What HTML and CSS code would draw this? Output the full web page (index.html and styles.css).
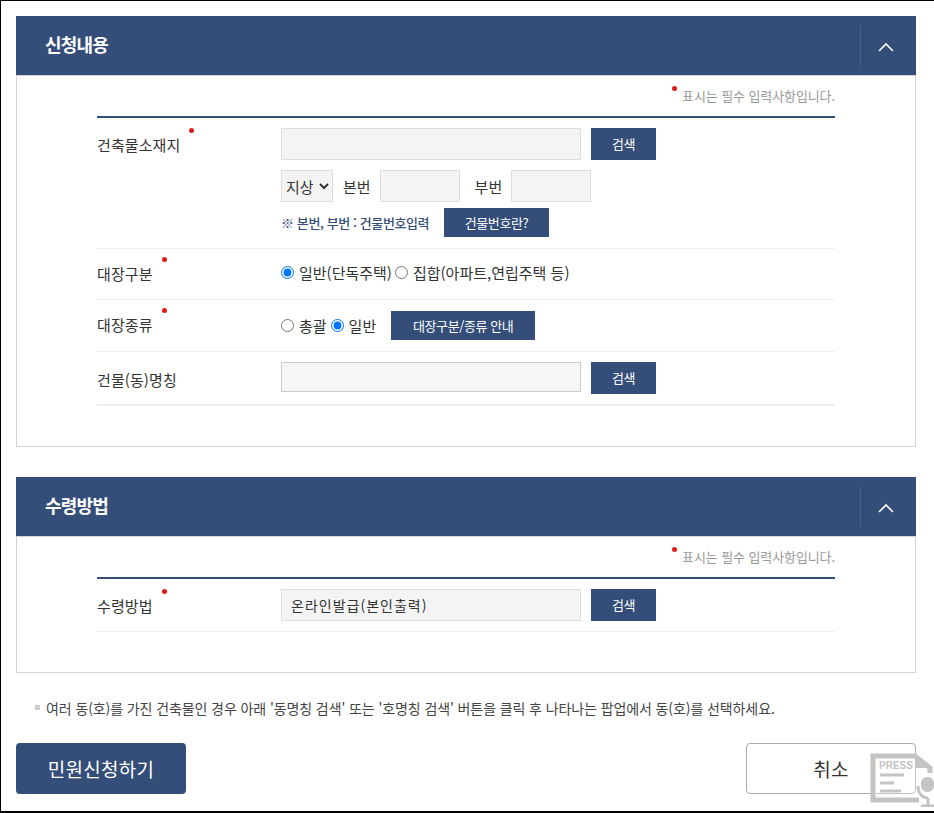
FILE: index.html
```html
<!DOCTYPE html>
<html lang="ko">
<head>
<meta charset="utf-8">
<title>민원신청</title>
<link rel="stylesheet" href="styles.css">
</head>
<body>
<div class="frame">
  <section class="panel first">
    <header class="panel-head">
      <h2>신청내용</h2>
      <button class="toggle" type="button" aria-label="접기"><svg width="16" height="10" viewBox="0 0 16 10"><path d="M1 9 L8 2 L15 9" fill="none" stroke="#fff" stroke-width="1.6"/></svg></button>
    </header>
    <div class="panel-body tall">
      <p class="req-note"><i class="dot"></i>표시는 필수 입력사항입니다.</p>
      <div class="rows">
        <div class="row r-addr">
          <div class="label"><span>건축물소재지<i class="dot"></i></span></div>
          <div class="field">
            <div class="line l1"><input class="inp wide" type="text"><button class="btn search" type="button">검색</button></div>
            <div class="line l2">
              <select class="sel"><option>지상</option></select>
              <span class="cap">본번</span><input class="inp small" type="text">
              <span class="cap cap2">부번</span><input class="inp small" type="text">
            </div>
            <div class="line l3"><span class="hint">※ 본번, 부번 : 건물번호입력</span><button class="btn what" type="button">건물번호란?</button></div>
          </div>
        </div>
        <div class="row r-kind">
          <div class="label"><span>대장구분<i class="dot"></i></span></div>
          <div class="field radios">
            <label><input type="radio" name="a" checked>일반(단독주택)</label>
            <label><input type="radio" name="a">집합(아파트,연립주택 등)</label>
          </div>
        </div>
        <div class="row r-type">
          <div class="label"><span>대장종류<i class="dot"></i></span></div>
          <div class="field radios">
            <label><input type="radio" name="b">총괄</label>
            <label><input type="radio" name="b" checked>일반</label>
            <button class="btn guide" type="button">대장구분/종류 안내</button>
          </div>
        </div>
        <div class="row r-name">
          <div class="label"><span>건물(동)명칭</span></div>
          <div class="field"><div class="line"><input class="inp wide thin" type="text"><button class="btn search" type="button">검색</button></div></div>
        </div>
      </div>
    </div>
  </section>

  <section class="panel second">
    <header class="panel-head">
      <h2>수령방법</h2>
      <button class="toggle" type="button" aria-label="접기"><svg width="16" height="10" viewBox="0 0 16 10"><path d="M1 9 L8 2 L15 9" fill="none" stroke="#fff" stroke-width="1.6"/></svg></button>
    </header>
    <div class="panel-body short">
      <p class="req-note"><i class="dot"></i>표시는 필수 입력사항입니다.</p>
      <div class="rows">
        <div class="row r-recv">
          <div class="label"><span>수령방법<i class="dot"></i></span></div>
          <div class="field"><div class="line"><input class="inp wide spaced" type="text" value="온라인발급(본인출력)"><button class="btn search" type="button">검색</button></div></div>
        </div>
      </div>
    </div>
  </section>

  <p class="notice">여러 동(호)를 가진 건축물인 경우 아래 '동명칭 검색' 또는 '호명칭 검색' 버튼을 클릭 후 나타나는 팝업에서 동(호)를 선택하세요.</p>

  <div class="actions">
    <button class="act primary" type="button">민원신청하기</button>
    <button class="act cancel" type="button">취소</button>
  </div>

  <svg class="press" width="64" height="54" viewBox="0 0 64 54" aria-hidden="true">
    <path d="M49 47 H3 V3 H45 L60 15 V20" fill="#fff" fill-opacity=".3" stroke="#c4c4c4" stroke-width="5"/>
    <path d="M45 3 L60 15 H45 Z" fill="#c4c4c4"/>
    <text x="9" y="16" class="press-text">PRESS</text>
    <path d="M10 22 H34 M10 30 H24 M10 38 H31" stroke="#c4c4c4" stroke-width="3"/>
    <rect x="51" y="24" width="13" height="15" rx="6" fill="#c4c4c4"/>
    <path d="M48 33 C48 41 53 45 58 45 M58 45 V54 M51 53 H64" stroke="#c4c4c4" stroke-width="3" fill="none"/>
  </svg>
</div>
</body>
</html>
```
FILE: styles.css
```css
* { box-sizing: border-box; }
html, body { margin: 0; padding: 0; background: #fff; }
body { font-family: "Noto Sans CJK KR", "Noto Sans", sans-serif; color: #333; }
.frame {
  position: relative;
  width: 934px;
  height: 813px;
  overflow: hidden;
  border: solid #000;
  border-width: 1px 0 2px 1px;
  padding: 15px 18px 0 15px;
}
.panel + .panel { margin-top: 30px; }
.panel-head {
  height: 59px;
  background: #344d79;
  display: flex;
  align-items: center;
  justify-content: space-between;
  padding: 0 4px 0 29px;
}
.panel-head h2 { margin: -2px 0 0; font-size: 18px; font-weight: 700; color: #fff; letter-spacing: -0.8px; line-height: 59px; }
.toggle {
  width: 52px;
  height: 40px;
  background: none;
  border: 0;
  border-left: 1px solid #4b628b;
  padding: 2px 2px 0 0;
  display: flex;
  align-items: center;
  justify-content: center;
}
.panel-body {
  border: 1px solid #d2d2d2;
  border-top: 0;
  padding: 0 80px;
  box-shadow: inset 0 1px 0 #d2d2d2;
}
.tall { height: 372px; }
.short { height: 137px; }
.req-note {
  margin: 0;
  height: 41px;
  padding-top: 11px;
  text-align: right;
  font-size: 13px;
  line-height: 20px;
  color: #999;
  letter-spacing: -0.1px;
}
.dot {
  display: inline-block;
  width: 5px;
  height: 5px;
  border-radius: 50%;
  background: #e01b1b;
  vertical-align: top;
}
.req-note .dot { margin: 0 5px 0 0; }
.rows { border-top: 2px solid #344d79; }
.row { display: flex; border-bottom: 1px solid #eee; }
.label { width: 184px; flex: none; font-size: 15px; line-height: 20px; color: #333; letter-spacing: 0.1px; }
.label span { position: relative; display: inline-block; }
.label .dot { position: absolute; right: -14px; top: -7px; }
.field { flex: 1; font-size: 15px; }
.line { display: flex; align-items: center; }
.inp {
  height: 32px;
  background: #f4f4f4;
  border: 1px solid #ddd;
  border-radius: 0;
  padding: 0 9px;
  font: 14px "Noto Sans CJK KR", sans-serif;
  color: #333;
  outline: 0;
}
.spaced { letter-spacing: 1px; }
.wide { width: 300px; }
.small { width: 80px; }
.btn {
  background: #344d79;
  color: #fff;
  border: 0;
  font: 13px "Noto Sans CJK KR", sans-serif;
  letter-spacing: -0.4px;
  padding: 0;
}
.search { width: 65px; height: 32px; margin-left: 10px; padding-bottom: 2px; }
.sel {
  width: 52px;
  height: 32px;
  background: #f4f4f4;
  border: 1px solid #ddd;
  border-radius: 0;
  padding: 0;
  font: 15px "Noto Sans CJK KR", sans-serif;
  color: #333;
}
.cap { margin: 0 9px 0 10px; font-size: 15px; color: #333; }
.cap2 { margin-left: 15px; margin-right: 9px; }
.l2 { margin-top: 10px; }
.l3 { margin-top: 6px; }
.hint { width: 163px; font-size: 13px; color: #344d79; letter-spacing: -0.4px; font-weight: 500; }
.what { width: 105px; height: 29px; }
.r-addr { height: 131px; padding-top: 10px; }
.r-addr .label { padding-top: 7px; }
.radios { display: flex; align-items: center; height: 100%; color: #333; }
.radios label { display: inline-flex; align-items: center; margin-right: 3px; line-height: 20px; }
.r-type .radios label { margin-right: 4px; }
.radios input { width: 13px; height: 13px; margin: 0 5px 0 0; accent-color: #0075ff; }
.r-kind { height: 51px; }
.r-kind .label { padding-top: 15px; }
.r-kind .radios { padding-bottom: 3px; }
.r-type { height: 52px; }
.r-type .label { padding-top: 15px; }
.guide { width: 144px; height: 29px; margin-left: 11px; }
.r-name { height: 54px; border-bottom-width: 2px; }
.r-name .label { padding-top: 18px; }
.r-name .field { padding-top: 10px; }
.r-name .line { align-items: flex-start; }
.thin { height: 30px; background: #f6f6f6; border-color: #ccc; }
.r-recv { height: 53px; padding-top: 10px; }
.r-recv .label { padding-top: 7px; }
.notice {
  position: relative;
  margin: 25px 0 0;
  padding-left: 30px;
  font-size: 14px;
  line-height: 20px;
  color: #444;
  letter-spacing: -0.1px;
  white-space: nowrap;
}
.notice::before {
  content: "";
  position: absolute;
  left: 19px;
  top: 7px;
  width: 5px;
  height: 5px;
  background: #ccc;
}
.actions { display: flex; justify-content: space-between; margin-top: 25px; }
.act { width: 170px; height: 51px; border-radius: 4px; font: 19px "Noto Sans CJK KR", sans-serif; letter-spacing: 0.3px; }
.primary { background: #344d79; border: 0; color: #fff; }
.cancel { background: #fff; border: 1px solid #aaa; color: #333; }
.press { position: absolute; right: 0; bottom: 4px; }
.press-text { font: 700 10px "Liberation Sans", sans-serif; fill: #c4c4c4; }
```
